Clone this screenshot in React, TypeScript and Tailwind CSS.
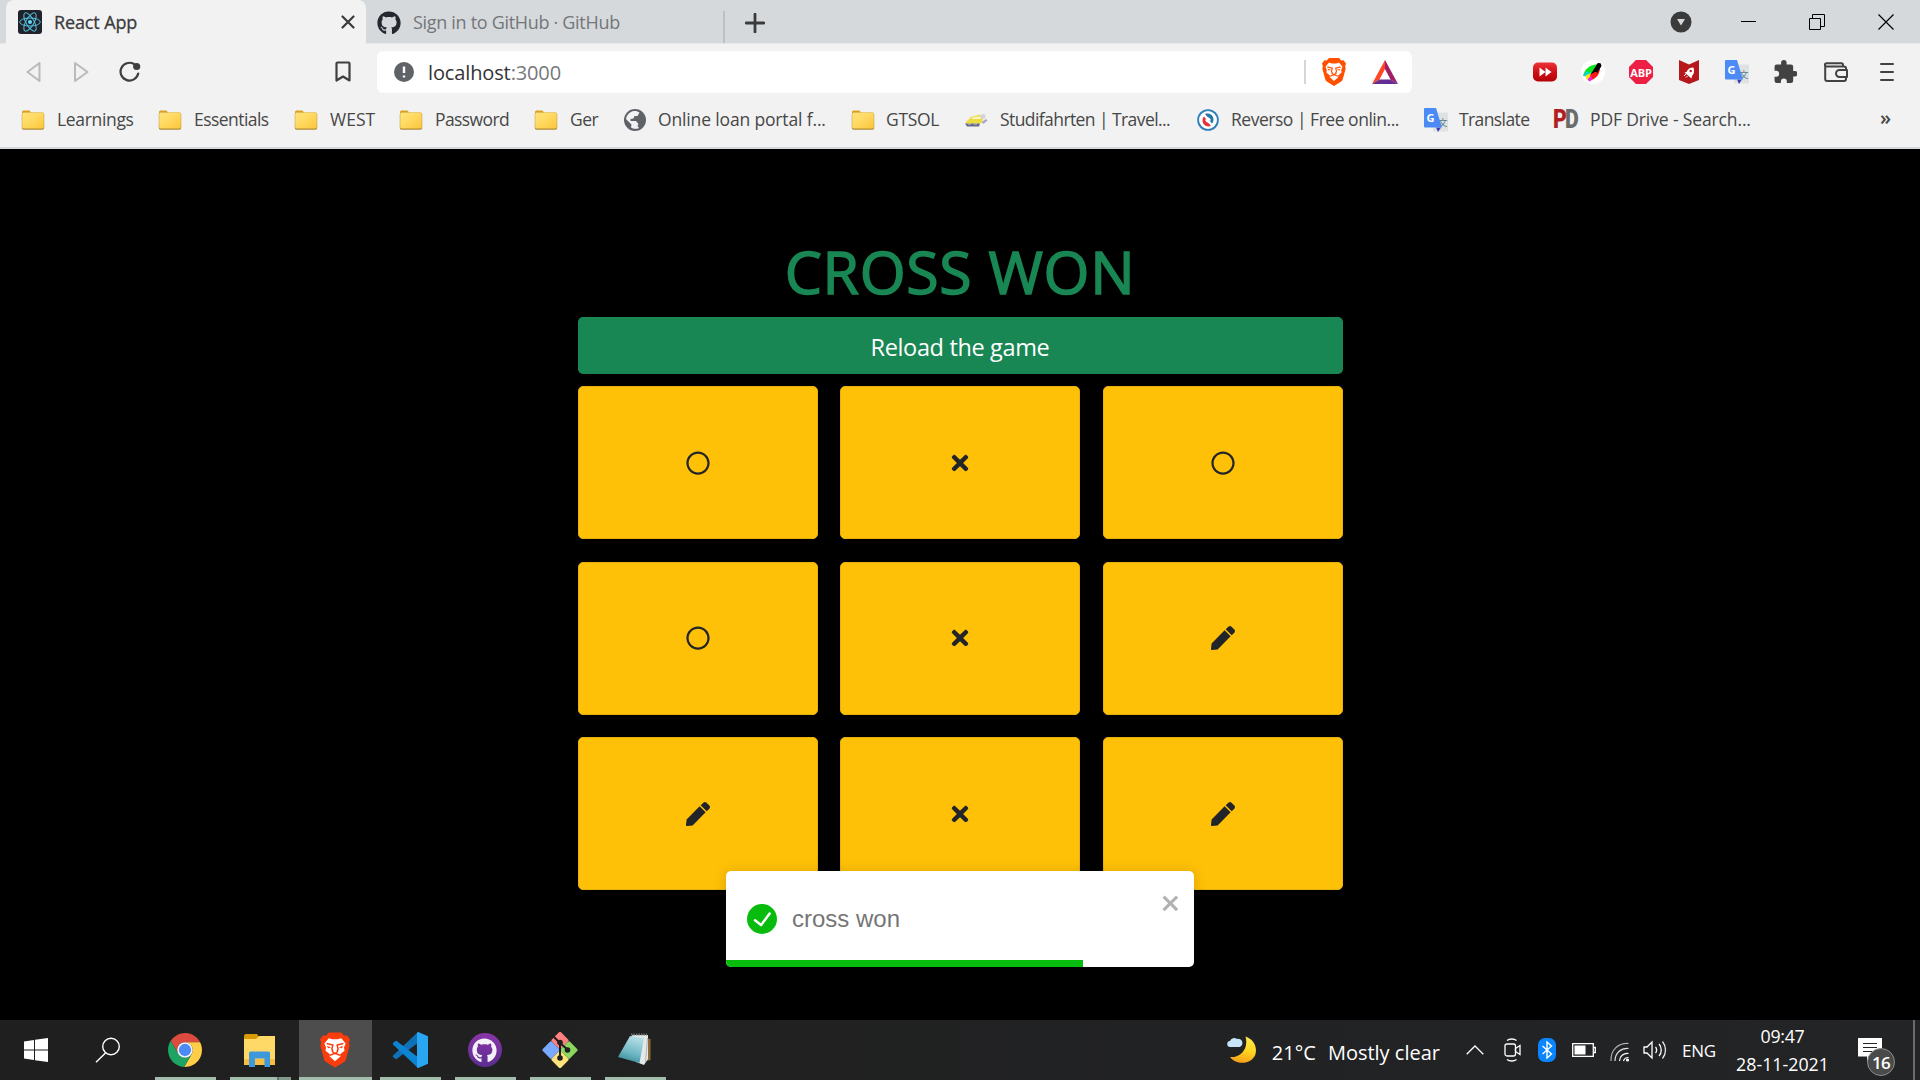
import type { ReactNode } from 'react';
import { FaGithub, FaPen, FaRegCircle, FaTimes } from 'react-icons/fa';

function ReactIcon() {
  return (
    <svg width="24" height="24" viewBox="0 0 24 24" className="shrink-0">
      <rect width="24" height="24" rx="3" fill="#20232a" />
      <g fill="none" stroke="#53c1de" strokeWidth="1">
        <ellipse cx="12" cy="12" rx="10.3" ry="4" />
        <ellipse cx="12" cy="12" rx="10.3" ry="4" transform="rotate(60 12 12)" />
        <ellipse cx="12" cy="12" rx="10.3" ry="4" transform="rotate(120 12 12)" />
      </g>
      <circle cx="12" cy="12" r="2" fill="#61dafb" />
    </svg>
  );
}

function BraveIcon({ width, height, color }: { width: number; height: number; color: string }) {
  return (
    <svg width={width} height={height} viewBox="0 0 24 28" className="shrink-0">
      <path
        d="M7 0h10l2.300 2.600 2.200-.4L24 5.500l-.9 2.700.6 2.300-3 11c-.3 1-1 1.800-1.800 2.300L12 28l-6.900-4.200c-.8-.5-1.500-1.300-1.800-2.300l-3-11 .6-2.300L0 5.500l2.500-3.300 2.200.4z"
        fill={color}
      />
      <path
        d="M7 4.500l2.800.9h4.400l2.800-.9 3.500 4.300-1.300 3.200.4 2.600-3.500 2.800.2 1.700L12 23l-4.300-3.900.2-1.700-3.500-2.800.4-2.600-1.300-3.200z"
        fill="#fff"
      />
      <g fill="none" stroke={color} strokeWidth="1.200">
        <path d="M5.300 8.800l5 1.300-.8 3 .8 2M18.700 8.800l-5 1.300.8 3-.8 2" />
        <path d="M9.500 15l2.500 1.800 2.500-1.800M8 18.200l4-1.500 4 1.500" />
      </g>
      <path d="M5.500 10.800l3.500.9-2.500.9zM18.500 10.800l-3.500.9 2.500.9z" fill={color} />
    </svg>
  );
}

function FolderIcon() {
  return (
    <svg width="24" height="20" viewBox="0 0 24 20">
      <defs>
        <linearGradient id="folder" x1="0" y1="0" x2="1" y2="1">
          <stop offset="0" stopColor="#ffe27a" />
          <stop offset="0.4" stopColor="#ffdb66" />
          <stop offset="1" stopColor="#fcc63a" />
        </linearGradient>
      </defs>
      <path d="M1 2a1.500 1.500 0 0 1 1.500-1.500H8.500L10.500 3v4H1z" fill="#dca01e" />
      <rect x="0.800" y="2.600" width="22.400" height="17.200" rx="1.800" fill="#b08a35" />
      <rect x="1.200" y="2.400" width="21.600" height="16" rx="1.500" fill="url(#folder)" />
    </svg>
  );
}

function GlobeIcon() {
  return (
    <svg width="22" height="22" viewBox="0 0 22 22">
      <circle cx="11" cy="11" r="11" fill="#5f6368" />
      <path
        d="M8 2.500c3-1 5.500-.4 7.500 1l-2 3.500h-3l-1 2.500-3 .5v2h5.500l2.500 3-1 2 1.500 2c-3 1.500-6 .8-8-.5l.5-3L5 13l-3-3C2.500 6.500 4.500 4 8 2.500z"
        fill="#f2f2f2"
      />
      <path d="M14 8l5-1 .5 5-3 2.500-2.500-2z" fill="#5f6368" />
    </svg>
  );
}

function BusIcon() {
  return (
    <svg width="24" height="18" viewBox="0 0 24 18">
      <path d="M2 11l5-5 9-2.500 3 5-2 4H2z" fill="#ecdc3e" />
      <path d="M7 8l3-2 6-.5 1 2.500z" fill="#fbf6c8" />
      <path d="M1 12.500h15l-1 3H3z" fill="#666892" />
      <path d="M4 12.500h3v1H4zM10 12.500h3v1h-3z" fill="#d8d66a" />
      <circle cx="19" cy="5.500" r="2.500" fill="#d2d3df" />
      <path d="M17.500 11l4.500-3 1.500 1.500-4 3.500z" fill="#a6a9c6" />
    </svg>
  );
}

function ReversoIcon() {
  return (
    <svg width="22" height="22" viewBox="0 0 22 22">
      <circle cx="11" cy="11" r="9.900" fill="#fff" stroke="#2c7fb8" strokeWidth="1.800" />
      <path d="M8 5c4-1.500 8.500 1 8.500 5.500 0 1.500-.5 3-1.500 4l-2.500-3h1.500c-.5-2.500-2.500-3-4-4z" fill="#2475b0" />
      <path d="M14 17c-4 1.500-8.500-1-8.500-5.500 0-1.500.5-3 1.500-4l2.500 3H8c.5 2.500 2.500 3 4 4z" fill="#e3343b" />
    </svg>
  );
}

function TranslateIcon() {
  return (
    <svg width="24" height="24" viewBox="0 0 24 24">
      <rect x="9" y="4.500" width="15" height="19" rx="1" fill="#dfe1e3" />
      <path d="M12 19.500h5l-3 4.500z" fill="#3a3fb5" />
      <text x="14" y="18" fontSize="9.500" fontFamily="Noto Sans CJK SC, sans-serif" fill="#56808a">
        文
      </text>
      <path d="M1 0h11l6 19.500H1a1 1 0 0 1-1-1V1a1 1 0 0 1 1-1z" fill="#4c8bf5" />
      <text x="2.600" y="13.500" fontSize="11" fontWeight="700" fontFamily="Open Sans, sans-serif" fill="#fff">
        G
      </text>
    </svg>
  );
}

function PdfDriveIcon() {
  return (
    <span className="flex h-6 w-[25px] items-center justify-center pl-0.5 font-['Roboto',sans-serif] text-[25px] leading-none font-black tracking-[-0.060em]">
      <span className="scale-x-[0.850] text-[#b01e22]">P</span>
      <span className="-ml-[3px] scale-x-[0.850] text-[#6b6b6b]">D</span>
    </span>
  );
}

type Bookmark = { label: string; icon: ReactNode; box: string; text: string };

const bookmarks: Bookmark[] = [
  { label: 'Learnings', icon: <FolderIcon />, box: 'w-[137px]', text: 'ml-3 tracking-[-0.330px]' },
  { label: 'Essentials', icon: <FolderIcon />, box: 'w-[136px]', text: 'ml-3 tracking-[-0.550px]' },
  { label: 'WEST', icon: <FolderIcon />, box: 'w-[105px]', text: 'ml-3' },
  { label: 'Password', icon: <FolderIcon />, box: 'w-[135px]', text: 'ml-3 tracking-[-0.600px]' },
  { label: 'Ger', icon: <FolderIcon />, box: 'w-[89px]', text: 'ml-3 tracking-[-0.500px]' },
  { label: 'Online loan portal f...', icon: <GlobeIcon />, box: 'w-[228px]', text: 'ml-[11px] tracking-[-0.150px]' },
  { label: 'GTSOL', icon: <FolderIcon />, box: 'w-[113px]', text: 'ml-[11px] tracking-[-0.300px]' },
  { label: 'Studifahrten | Travel...', icon: <BusIcon />, box: 'w-[232px]', text: 'ml-3 tracking-[-0.580px]' },
  { label: 'Reverso | Free onlin...', icon: <ReversoIcon />, box: 'w-[228px]', text: 'ml-[11px] tracking-[-0.480px]' },
  { label: 'Translate', icon: <TranslateIcon />, box: 'w-[128px]', text: 'ml-[11px] tracking-[-0.600px]' },
  { label: 'PDF Drive - Search...', icon: <PdfDriveIcon />, box: 'w-[200px]', text: 'ml-[13px] tracking-[-0.130px]' },
];

function TabStrip() {
  return (
    <div className="flex h-[44px] items-start border-b border-[#e4e6e8] bg-[#d5d9dc] pl-[6px]">
      <div className="flex h-[44px] w-[360px] items-center rounded-t-lg bg-[#f2f2f2] pr-[10px] pl-3">
        <ReactIcon />
        <span className="ml-3 text-[18px] tracking-[-0.120px] text-[#3b3b3b] [-webkit-text-stroke:0.300px_#3b3b3b]">
          React App
        </span>
        <svg width="16" height="16" viewBox="0 0 16 16" className="ml-auto">
          <path d="M2.500 2.500l11 11M13.500 2.500l-11 11" stroke="#3b3b3b" strokeWidth="2.200" strokeLinecap="round" />
        </svg>
      </div>
      <div className="mt-[11px] flex h-8 w-[359px] items-start border-r-2 border-[#bec1c4] pl-[11px]">
        <FaGithub size={24} color="#24292f" />
        <span className="ml-3 text-[18px] leading-[23px] tracking-[-0.310px] text-[#747679]">
          Sign in to GitHub · GitHub
        </span>
      </div>
      <svg width="20" height="20" viewBox="0 0 18 18" className="mt-[13px] ml-[20px]">
        <path d="M9 1v16M1 9h16" stroke="#3b3b3b" strokeWidth="2.500" strokeLinecap="round" />
      </svg>
      <div className="mr-[26px] ml-auto flex h-[44px] items-center">
        <svg width="22" height="22" viewBox="0 0 22 22" className="mr-[49px]">
          <circle cx="11" cy="11" r="10.500" fill="#3b3b3b" />
          <path d="M7 8h8l-4 6.500z" fill="#d5d9dc" />
        </svg>
        <svg width="15" height="15" viewBox="0 0 15 15" className="mr-[53px]">
          <path d="M0 6.500h15" stroke="#000" />
        </svg>
        <svg width="16" height="16" viewBox="0 0 16 16" className="mr-[53px] mb-px" fill="none" stroke="#000">
          <path d="M.5 4.500h11v11H.5zM3.500 4.500v-4h12v12h-4" />
        </svg>
        <svg width="16" height="16" viewBox="0 0 16 16" className="mb-px">
          <path d="M.5 .5l15 15M15.500 .5l-15 15" stroke="#000" strokeWidth="1.200" />
        </svg>
      </div>
    </div>
  );
}

function Toolbar() {
  return (
    <div className="flex h-[56px] items-center">
      <svg width="16" height="22" viewBox="0 0 16 22" className="ml-[26px]">
        <path d="M13.500 2v18L1.500 11z" fill="none" stroke="#bababa" strokeWidth="2" strokeLinejoin="round" />
      </svg>
      <svg width="16" height="22" viewBox="0 0 16 22" className="ml-[31px]">
        <path d="M2 2v18l12.500-9z" fill="none" stroke="#bababa" strokeWidth="2" strokeLinejoin="round" />
      </svg>
      <svg width="22" height="22" viewBox="0 0 22 22" className="ml-[30px]">
        <path d="M19.200 12.500A8.900 8.900 0 1 1 15 3" fill="none" stroke="#3f3f3f" strokeWidth="2.200" strokeLinecap="round" />
        <circle cx="17.700" cy="5.500" r="3.600" fill="#3f3f3f" />
      </svg>
      <svg width="16" height="22" viewBox="0 0 16 22" className="ml-[194px]">
        <path
          d="M1.500 2.500a1 1 0 0 1 1-1h11a1 1 0 0 1 1 1v17L8 15.500l-6.500 4z"
          fill="none"
          stroke="#3f3f3f"
          strokeWidth="2.200"
          strokeLinejoin="round"
        />
      </svg>
      <div className="ml-[26px] flex h-[42px] w-[1035px] items-center rounded-md bg-white pl-[17px]">
        <svg width="20" height="20" viewBox="0 0 20 20">
          <circle cx="10" cy="10" r="10" fill="#5f6368" />
          <path d="M10 4.500v6.500M10 13.500v2" stroke="#fff" strokeWidth="2.400" />
        </svg>
        <span className="ml-[14px] pt-px text-[20px] tracking-[-0.130px] text-[#333]">
          localhost<span className="text-[#75777a]">:3000</span>
        </span>
        <div className="ml-auto h-6 w-0.5 bg-[#d6d6d6]" />
        <div className="ml-[14px] flex w-[27px] justify-center">
          <BraveIcon width={24} height={28} color="#ff5000" />
        </div>
        <svg width="26" height="24" viewBox="0 0 26 24" className="mr-[14px] ml-[25px]">
          <path d="M13 0L0 24l7.500-4.500L13 9z" fill="#ff4724" />
          <path d="M13 0l13 24-7.500-4.500L13 9z" fill="#9e1f63" />
          <path d="M0 24h26l-7.500-4.500h-11z" fill="#662d91" />
        </svg>
      </div>
      <div className="mr-[26px] ml-auto flex items-center">
        <svg width="24" height="20" viewBox="0 0 24 20">
          <defs>
            <linearGradient id="ffwd" x1="0" y1="0" x2="0" y2="1">
              <stop offset="0" stopColor="#ee3338" />
              <stop offset="0.5" stopColor="#cf1016" />
              <stop offset="1" stopColor="#b30006" />
            </linearGradient>
          </defs>
          <rect y="0.500" width="24" height="19" rx="5" fill="url(#ffwd)" />
          <path d="M6.500 5.500l6 4.500-6 4.500zM12.500 5.500l6 4.500-6 4.500z" fill="#fff" />
        </svg>
        <svg width="24" height="24" viewBox="0 0 24 24" className="ml-6">
          <circle cx="12" cy="12" r="12" fill="#fff" />
          <path d="M2 16C3.500 9 9.500 3.500 17.500 4.500L9 15z" fill="#0ce51c" />
          <path d="M2 16l4-5 4 2.500-5 3z" fill="#00d5e8" />
          <path d="M4.500 15.500l6-2.500-1 6-4 .5z" fill="#ffe600" />
          <path d="M9 15l9.500-9.500c1.500 6-1.500 12-8 14.500z" fill="#fa1616" />
          <path d="M6.500 19.500L10 15.500l1.500 4-3 2z" fill="#f41ad8" />
          <path d="M9.500 14.500l7-11 3.500 3-4 7c0-3-2-2-6.500 1z" fill="#000" />
          <circle cx="18" cy="5.500" r="2.400" fill="#000" />
        </svg>
        <div className="ml-6 flex h-6 w-6 items-center justify-center bg-[#ee1f45] [clip-path:polygon(29%_0,71%_0,100%_29%,100%_71%,71%_100%,29%_100%,0_71%,0_29%)]">
          <span className="text-[11px] leading-none font-bold tracking-[-0.200px] text-white">ABP</span>
        </div>
        <svg width="20" height="24" viewBox="0 0 20 24" className="ml-[26px]">
          <path d="M0 0l10 4.500L20 0v20l-10 4-10-4z" fill="#b5171b" />
          <path d="M14.500 7.500c-4 0-6 2-7 4.500l-2 .5 7 6 .5-2.500c2-1.500 2.500-5 1.500-8.500z" fill="#fff" />
          <circle cx="11.700" cy="11" r="1.200" fill="#b5171b" />
          <path d="M5 16l2-2M7 17.500l1.500-1.500" stroke="#fff" strokeWidth="1" />
        </svg>
        <div className="ml-[26px]">
          <TranslateIcon />
        </div>
        <svg width="23" height="23" viewBox="1.500 1 21 21" className="mb-0.5 ml-[25px]">
          <path
            d="M20.500 11H19V7a2 2 0 0 0-2-2h-4V3.500a2.500 2.500 0 0 0-5 0V5H4a2 2 0 0 0-2 2v3.800h1.500a2.700 2.700 0 0 1 0 5.400H2V20a2 2 0 0 0 2 2h3.800v-1.500a2.700 2.700 0 0 1 5.400 0V22H17a2 2 0 0 0 2-2v-4h1.500a2.500 2.500 0 0 0 0-5z"
            fill="#424242"
          />
        </svg>
        <svg
          width="24"
          height="20"
          viewBox="0 0 24 20"
          className="ml-[27px]"
          fill="none"
          stroke="#424242"
          strokeWidth="2"
          strokeLinejoin="round"
          strokeLinecap="round"
        >
          <path d="M22 8V6.500a2 2 0 0 0-2-2H2.500a1.500 1.500 0 0 1 0-3.300H17.500a1.500 1.500 0 0 1 1.500 1.500v1.500M1.200 3v14a2 2 0 0 0 2 2H20a2 2 0 0 0 2-2v-1.500" />
          <path d="M23 8h-7.500a3.500 3.500 0 0 0 0 7H23z" />
        </svg>
        <svg width="14" height="20" viewBox="0 0 14 20" className="ml-[32px]">
          <path d="M1 2h12M1 10h12M1 18h12" stroke="#424242" strokeWidth="2" strokeLinecap="round" />
        </svg>
      </div>
    </div>
  );
}

function BookmarksBar() {
  return (
    <div className="flex h-[49px] items-center border-b-2 border-[#d5d9dc] pb-[8px] pl-[21px]">
      {bookmarks.map(({ label, icon, box, text }) => (
        <div key={label} className={`flex shrink-0 items-center text-[17.5px] whitespace-nowrap text-[#474747] ${box}`}>
          <span className="flex min-w-6 shrink-0 justify-center">{icon}</span>
          <span className={text}>{label}</span>
        </div>
      ))}
      <span className="mr-[29px] mb-1 ml-auto text-[20px] leading-none font-semibold text-[#474747]">»</span>
    </div>
  );
}

const cells = ['circle', 'cross', 'circle', 'circle', 'cross', 'pen', 'pen', 'cross', 'pen'];

function Game() {
  return (
    <div className="flex w-[765px] flex-col">
      <h1 className="text-center text-[59px] leading-[72px] tracking-[0.700px] text-[#198754] [-webkit-text-stroke:1.500px_#198754]">
        CROSS WON
      </h1>
      <button className="mt-[10px] h-[57px] rounded-[5px] bg-[#198754] pt-1 text-[23.500px] tracking-[-0.350px] text-white">
        Reload the game
      </button>
      <div className="mt-3 grid grid-cols-[240px_240px_240px] justify-between gap-y-[22.500px]">
        {cells.map((cell, i) => (
          <div
            key={i}
            className="flex h-[153px] items-center justify-center rounded-[5px] border border-[#e9b10c] bg-[#ffc107] text-[#212529]"
          >
            {cell === 'circle' && <FaRegCircle size={24} />}
            {cell === 'cross' && <FaTimes size={24} />}
            {cell === 'pen' && <FaPen size={24} />}
          </div>
        ))}
      </div>
    </div>
  );
}

function Toast() {
  return (
    <div className="absolute top-[722px] left-1/2 flex h-24 w-[468px] -translate-x-1/2 flex-col overflow-hidden rounded-[5px] bg-white shadow-[0_1px_12px_2px_rgba(0,0,0,0.120)]">
      <div className="flex flex-1 items-start pr-3 pl-[21px]">
        <svg width="30" height="30" viewBox="0 0 24 24" className="mt-[33px]">
          <path
            fill="#07bc0c"
            d="M12 0a12 12 0 1012 12A12.014 12.014 0 0012 0zm6.927 8.200l-6.845 9.289a1.011 1.011 0 01-1.430.188l-4.888-3.908a1 1 0 111.250-1.562l4.076 3.261 6.227-8.451a1 1 0 111.610 1.183z"
          />
        </svg>
        <span className="mt-[30px] ml-[15px] font-['Liberation_Sans',Arial,sans-serif] text-[24px] leading-9 text-[#757575]">
          cross won
        </span>
        <svg width="21" height="24" viewBox="0 0 14 16" className="mt-[20px] ml-auto">
          <path
            fill="#b2b2b2"
            d="M7.710 8.230l3.750 3.750-1.480 1.480-3.750-3.750-3.750 3.750L1 11.980l3.750-3.750L1 4.480 2.480 3l3.750 3.750L9.980 3l1.480 1.480-3.750 3.750z"
          />
        </svg>
      </div>
      <div className="h-[7px] w-[357px] bg-[#07bc0c]" />
    </div>
  );
}

const chromePetal = 'M24 13H45.300A24 24 0 0 0 3.850 11L14.500 29.500A11 11 0 0 1 24 13z';

function ChromeIcon() {
  return (
    <svg width="34" height="34" viewBox="0 0 48 48">
      <path d={chromePetal} fill="#dd4b3e" />
      <path d={chromePetal} fill="#ffcd46" transform="rotate(120 24 24)" />
      <path d={chromePetal} fill="#1da362" transform="rotate(240 24 24)" />
      <circle cx="24" cy="24" r="11" fill="#f4f4f4" />
      <circle cx="24" cy="24" r="8.700" fill="#4c8bf5" />
    </svg>
  );
}

function ExplorerIcon() {
  return (
    <svg width="32" height="36" viewBox="0 0 32 36">
      <path d="M0 4a2 2 0 0 1 2-2h11l2 3v4H0z" fill="#d99a08" />
      <path d="M0 7h12l3-3h16v28H0z" fill="#ffd968" />
      <path d="M0 27h31v6H0z" fill="#f6bd45" />
      <path d="M5 21a1.500 1.500 0 0 1 1.500-1.500h18A1.500 1.500 0 0 1 26 21v14h-5.500v-8.500h-9.500V35H5z" fill="#3e98dc" />
    </svg>
  );
}

function VsCodeIcon() {
  return (
    <svg width="36" height="36" viewBox="0 0 36 36">
      <path d="M25.500.500L1 23.500a1.500 1.500 0 0 0 0 1.500l2.200 1.800a1.500 1.500 0 0 0 1.800 0L27 10z" fill="#0f72b9" />
      <path d="M25.500 35.500L1 12.500A1.500 1.500 0 0 1 1 11l2.200-1.800a1.500 1.500 0 0 1 1.800 0L27 26z" fill="#0d84d1" />
      <path d="M26.300 0L36 4.300v27.400L26.300 36c-1 .2-1.300-.3-1.300-1.300V1.300C25 .3 25.500-.2 26.300 0z" fill="#2aa5f2" />
    </svg>
  );
}

function GitHubDesktopIcon() {
  return (
    <div className="flex h-[34px] w-[34px] items-center justify-center rounded-full bg-linear-to-b from-[#8a34a8] to-[#5c2d91]">
      <FaGithub size={25} color="#f4f1f8" />
    </div>
  );
}

function GitIcon() {
  return (
    <svg width="36" height="36" viewBox="0 0 36 36">
      <rect x="11.500" y="2" width="13" height="13" rx="1.500" fill="#ff8080" transform="rotate(45 18 8.500)" />
      <rect x="2.500" y="11.500" width="13" height="13" rx="1.500" fill="#7ba9ff" transform="rotate(45 9 18)" />
      <rect x="20.500" y="11.500" width="13" height="13" rx="1.500" fill="#8bd65e" transform="rotate(45 27 18)" />
      <rect x="11.500" y="21" width="13" height="13" rx="1.500" fill="#ffe37d" transform="rotate(45 18 27.500)" />
      <path d="M11 4l7 7v15M18 11l8 7" stroke="#1f1f1f" strokeWidth="2" fill="none" />
      <circle cx="18" cy="10.500" r="2.800" fill="#1f1f1f" />
      <circle cx="25.500" cy="18" r="2.800" fill="#1f1f1f" />
      <circle cx="18" cy="26" r="2.800" fill="#1f1f1f" />
    </svg>
  );
}

function NotepadIcon() {
  return (
    <svg width="34" height="34" viewBox="0 0 34 34">
      <defs>
        <linearGradient id="pad" x1="0.600" y1="0" x2="0.300" y2="1">
          <stop offset="0" stopColor="#b9dfe6" />
          <stop offset="0.600" stopColor="#6db7c4" />
          <stop offset="1" stopColor="#3b8796" />
        </linearGradient>
      </defs>
      <path d="M28 5l4.500 1v21L28 28z" fill="#8d6a33" />
      <path d="M14 2h16v24l-4 6-8-3z" fill="#e4e8e8" />
      <path d="M29.500 5l-2 24" stroke="#aeb6b7" />
      <path d="M12 3l14 2-4.500 25L0 24z" fill="url(#pad)" />
      <path d="M13 1.500h16" stroke="#6e7474" strokeWidth="2" strokeDasharray="1.500 1" />
    </svg>
  );
}

const apps = [
  { id: 'chrome', icon: <ChromeIcon />, cell: 'w-[61px]', extra: false },
  { id: 'explorer', icon: <ExplorerIcon />, cell: 'w-[61px] ml-[14px]', extra: true },
  {
    id: 'brave',
    icon: <BraveIcon width={30} height={36} color="#fb3c0c" />,
    cell: 'w-[73px] ml-2 bg-[#4d4d4d]',
    extra: false,
  },
  { id: 'vscode', icon: <VsCodeIcon />, cell: 'w-[61px] ml-2', extra: false },
  { id: 'github', icon: <GitHubDesktopIcon />, cell: 'w-[61px] ml-[14px]', extra: false },
  { id: 'git', icon: <GitIcon />, cell: 'w-[61px] ml-[14px]', extra: false },
  { id: 'notepad', icon: <NotepadIcon />, cell: 'w-[61px] ml-[14px]', extra: false },
];

function Taskbar() {
  return (
    <div className="flex h-[60px] items-stretch bg-linear-to-r from-[#1f1f1f] to-[#232426] text-white">
      <div className="flex w-[155px] items-center pl-6">
        <svg width="24" height="24" viewBox="0 0 24 24">
          <path d="M0 3.400L10 2v9.500H0zM11 1.800L24 0v11.500H11zM0 12.500h10V22L0 20.600zM11 12.500h13V24l-13-1.800z" fill="#fff" />
        </svg>
        <svg width="26" height="26" viewBox="0 0 26 26" className="ml-[47px]">
          <circle cx="16" cy="9.500" r="8.300" fill="none" stroke="#fff" strokeWidth="1.400" />
          <path d="M10.500 16L1 25.300" stroke="#fff" strokeWidth="1.400" />
        </svg>
      </div>
      {apps.map(({ id, icon, cell, extra }) => (
        <div key={id} className={`flex flex-col ${cell}`}>
          <div className="flex h-[57px] items-center justify-center pt-[3px] pr-0.5">{icon}</div>
          <div className="flex h-[3px] bg-[#a3bdad]">
            {extra && <div className="ml-auto w-[14px] border-l-2 border-[#66756c] bg-[#84998c]" />}
          </div>
        </div>
      ))}
      <div className="ml-auto flex items-center">
        <svg width="30" height="30" viewBox="0 0 30 30">
          <defs>
            <linearGradient id="moon" x1="0.500" y1="0" x2="0.300" y2="1">
              <stop offset="0" stopColor="#ffe94a" />
              <stop offset="0.500" stopColor="#ffd51f" />
              <stop offset="1" stopColor="#f59c1a" />
            </linearGradient>
          </defs>
          <path d="M18.500 1.500C26 4 30.500 11 28.500 19 26 28 11 32 3 22c10 1 19-8 15.500-20.500z" fill="url(#moon)" />
          <path d="M3.500 12a3 3 0 0 1-.5-6 4.500 4.500 0 0 1 7-2 4 4 0 0 1 2.500 8z" fill="#c6e5fa" />
        </svg>
        <span className="ml-[15px] pt-[5px] text-[20px]">21°C</span>
        <span className="ml-3 pt-[5px] text-[20px]">Mostly clear</span>
        <svg width="18" height="10" viewBox="0 0 18 10" className="ml-[26px]">
          <path d="M.7 9.300L9 1l8.300 8.300" fill="none" stroke="#fff" strokeWidth="1.300" />
        </svg>
        <svg width="18" height="24" viewBox="0 0 18 24" className="ml-[20px]" fill="none" stroke="#fff" strokeWidth="1.300">
          <path d="M3 2.500c2.500-2 7-2 9.500 0M3 21.500c2.500 2 7 2 9.500 0" />
          <rect x="1" y="6" width="10.500" height="12" rx="2" />
          <path d="M11.500 10.500l4.500-3v9l-4.500-3z" />
        </svg>
        <svg width="18" height="24" viewBox="0 0 18 24" className="ml-[16px]">
          <rect width="18" height="24" rx="7" fill="#0a84ff" />
          <path d="M4.500 8l9 8-4.500 4V4l4.500 4-9 8" fill="none" stroke="#fff" strokeWidth="1.400" />
        </svg>
        <svg width="24" height="14" viewBox="0 0 24 14" className="ml-[16px]">
          <path d="M.7 .7h20.600v12.600H.7zM21.500 4.500h1.800v5h-1.800" fill="none" stroke="#fff" strokeWidth="1.300" />
          <rect x="2.500" y="2.500" width="11" height="9" fill="#fff" />
        </svg>
        <svg width="20" height="20" viewBox="0 0 20 20" className="mt-[3px] ml-[14px]" fill="none" stroke="#fff" strokeWidth="1.200">
          <path d="M1 19C.5 8 8 1 18.500 1.500" opacity="0.650" />
          <path d="M5 19c0-8 6-13 13.500-12.500" opacity="0.850" />
          <path d="M9.500 19c0-5 4-8 9-7.500M13.500 19c.5-2 2.500-3.500 5-3.500" />
          <circle cx="17.500" cy="18" r="1" fill="#fff" />
        </svg>
        <svg width="24" height="20" viewBox="0 0 24 20" className="ml-[13px]" fill="none" stroke="#fff" strokeWidth="1.300">
          <path d="M1 7h3l5-5v16l-5-5H1z" />
          <path d="M12.500 7c1.500 1.500 1.500 4.500 0 6M16 4c3 3 3 9 0 12" />
          <path d="M19.500 1.500c4 5 4 12 0 17" opacity="0.900" />
        </svg>
        <span className="ml-[15px] pt-0.5 text-[17px] tracking-[-0.200px]">ENG</span>
        <div className="ml-[19px] flex w-[95px] flex-col items-center gap-[4px] text-[17.800px] leading-6">
          <span className="tracking-[-0.300px]">09:47</span>
          <span className="whitespace-nowrap">28-11-2021</span>
        </div>
        <div className="relative ml-[28px] h-[60px] w-[57px] border-r-2 border-[#6a6b6c]">
          <svg width="24" height="24" viewBox="0 0 24 24" className="absolute top-[18px] left-0">
            <path d="M0 0h24v18.500h-9L9 24v-5.500H0z" fill="#fff" />
            <path d="M5 5.500h14M5 9.500h14M5 13.500h9" stroke="#232426" strokeWidth="1.200" />
          </svg>
          <div className="absolute top-[28px] left-[9px] flex h-7 w-7 items-center justify-center rounded-full border border-[#8c8c8c] bg-[#4a4a4a] text-[17px] leading-none font-semibold tracking-[-0.800px]">
            16
          </div>
        </div>
        <div className="w-[5px]" />
      </div>
    </div>
  );
}

export default function App() {
  return (
    <div className="flex h-[1080px] w-[1920px] flex-col overflow-hidden bg-black font-['Open_Sans',sans-serif]">
      <header className="bg-[#f2f2f2]">
        <TabStrip />
        <Toolbar />
        <BookmarksBar />
      </header>
      <main className="relative flex flex-1 justify-center pt-[86px]">
        <Game />
        <Toast />
      </main>
      <Taskbar />
    </div>
  );
}
